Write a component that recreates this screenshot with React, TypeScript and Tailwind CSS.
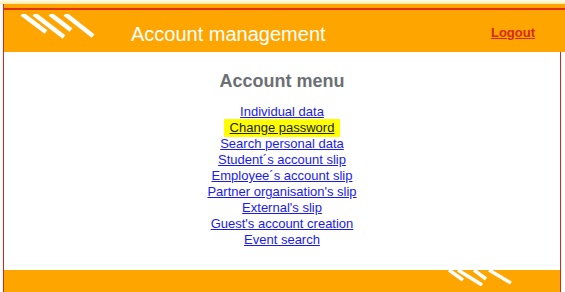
const links = [
  'Individual data',
  'Change password',
  'Search personal data',
  'Student´s account slip',
  'Employee´s account slip',
  "Partner organisation's slip",
  "External's slip",
  "Guest's account creation",
  'Event search',
]

function Stripes({ className }: { className?: string }) {
  return (
    <svg width="80" height="26" viewBox="0 0 80 26" className={className}>
      <g stroke="#ffffff" strokeWidth="4.5" strokeLinecap="butt">
        <line x1="2" y1="0" x2="26" y2="18" />
        <line x1="14" y1="0" x2="44" y2="23" />
        <line x1="30" y1="0" x2="51" y2="16" />
        <line x1="45" y1="0" x2="73" y2="22" />
      </g>
    </svg>
  )
}

export default function App() {
  return (
    <div className="w-[565px] h-[292px] bg-white overflow-hidden flex flex-col" style={{ fontFamily: '"Liberation Sans", Arial, sans-serif' }}>
      {/* top glow */}
      <div className="h-[4px] shrink-0 bg-gradient-to-b from-[#fffde8] to-[#ffe9a8]" />

      <div className="flex-1 flex flex-col ml-[3px] border-l border-[#d42a1c]">
        {/* header */}
        <div className="h-[48px] shrink-0 bg-[#ffa500] flex flex-col">
          <div className="mt-[4px] h-[2px] bg-[#e0301a]" />
          <div className="flex-1 flex items-start relative">
            <Stripes className="absolute left-[16px] top-[4px]" />
            <h1 className="ml-[127px] mt-[12px] text-[20px] leading-[24px] text-white">Account management</h1>
            <a href="#" className="ml-auto mr-[30px] mt-[15px] text-[13px] leading-[16px] font-bold text-[#d42a1c] underline">Logout</a>
          </div>
        </div>

        {/* content */}
        <div className="flex-1 mr-[4px] border-r border-[#d42a1c] flex flex-col items-center pt-[18px]">
          <h2 className="text-[18px] leading-[22px] font-bold text-[#6c6f73]">Account menu</h2>
          <ul className="mt-[12px] flex flex-col items-center text-[13px] leading-[16px]">
            {links.map(l =>
              l === 'Change password' ? (
                <li key={l} className="bg-[#ffff00] px-[6px] -my-[1px] py-[1px]">
                  <a href="#" className="text-[#222222] underline">{l}</a>
                </li>
              ) : (
                <li key={l}>
                  <a href="#" className="text-[#1a1aee] underline">{l}</a>
                </li>
              )
            )}
          </ul>
        </div>

        {/* footer */}
        <div className="h-[22px] shrink-0 mr-[4px] border-r border-[#d42a1c] bg-[#ffa500] relative overflow-hidden">
          <svg width="70" height="16" viewBox="0 0 70 16" className="absolute left-[444px] top-0">
            <g stroke="#ffffff" strokeWidth="3.5">
              <line x1="1" y1="0" x2="15" y2="10" />
              <line x1="10" y1="0" x2="34" y2="15" />
              <line x1="26" y1="0" x2="38" y2="9" />
              <line x1="41" y1="0" x2="63" y2="13" />
            </g>
          </svg>
        </div>
      </div>
    </div>
  )
}
